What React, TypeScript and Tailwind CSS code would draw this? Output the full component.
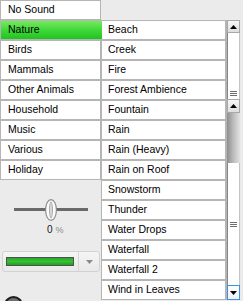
const categories = [
  "No Sound",
  "Nature",
  "Birds",
  "Mammals",
  "Other Animals",
  "Household",
  "Music",
  "Various",
  "Holiday",
];

const sounds = [
  "Beach",
  "Creek",
  "Fire",
  "Forest Ambience",
  "Fountain",
  "Rain",
  "Rain (Heavy)",
  "Rain on Roof",
  "Snowstorm",
  "Thunder",
  "Water Drops",
  "Waterfall",
  "Waterfall 2",
  "Wind in Leaves",
];

function Grip() {
  return (
    <svg width="7" height="6" viewBox="0 0 7 6">
      <rect x="0" y="0" width="7" height="1" fill="#6e6e6e" />
      <rect x="0" y="2" width="7" height="1" fill="#6e6e6e" />
      <rect x="0" y="4" width="7" height="1" fill="#6e6e6e" />
    </svg>
  );
}

function Arrow({ down = false }: { down?: boolean }) {
  return (
    <svg width="7" height="4" viewBox="0 0 7 4">
      <polygon points={down ? "0,0 7,0 3.5,4" : "0,4 7,4 3.5,0"} fill="#000" />
    </svg>
  );
}

function ScrollButton({ h, down = false }: { h: string; down?: boolean }) {
  return (
    <div
      className={`flex shrink-0 items-center justify-center border bg-gradient-to-b ${h} ${
        down
          ? "border-[#3a92e6] from-white to-[#f0f0f0]"
          : "border-[#a8a8a8] from-[#f7f7f7] to-[#dedede]"
      }`}
    >
      <Arrow down={down} />
    </div>
  );
}

export default function App() {
  return (
    <div
      className="flex h-[301px] w-[243px] overflow-hidden bg-[#ebebeb] text-black"
      style={{ fontFamily: '"Liberation Sans", Arial, sans-serif' }}
    >
      {/* Catégories */}
      <div className="flex w-[101px] shrink-0 flex-col">
        <div className="flex shrink-0 flex-col gap-[2px] bg-[#b5b5b5] px-[1px] py-[1px]">
          {categories.map((c) => (
            <div
              key={c}
              className={`flex h-[18px] shrink-0 items-center pl-[7px] text-[10.5px] ${
                c === "Nature"
                  ? "relative z-10 -mr-[2px] bg-gradient-to-b from-[#74ea5e] via-[#3ed83a] to-[#1ec41e]"
                  : "bg-white"
              }`}
            >
              {c}
            </div>
          ))}
        </div>

        {/* Volume */}
        <svg className="mt-[18px] shrink-0" width="101" height="24" viewBox="0 0 101 24">
          <rect x="14" y="10" width="74" height="3" fill="#6a6a6a" />
          <ellipse cx="51" cy="12" rx="6" ry="11" fill="#8c8c8c" />
          <ellipse cx="51" cy="12" rx="4.8" ry="9.8" fill="#fbfbfb" />
          <ellipse cx="51" cy="12" rx="2" ry="8.5" fill="#a9a9a9" />
          <ellipse cx="51" cy="12" rx="1" ry="7.5" fill="#d8d8d8" />
        </svg>
        <div className="mt-[2px] flex h-[12px] shrink-0 items-center pl-[47px] text-[10px] leading-none">
          <span className="text-[#1a1a1a]">0</span>
          <span className="ml-[3px] text-[9px] text-[#8a8a8a]">%</span>
        </div>

        {/* Couleur */}
        <div className="ml-[2px] mt-[15px] flex h-[21px] w-[98px] shrink-0 items-center rounded-[3px] border border-[#d2d2d2] bg-gradient-to-b from-[#f5f5f5] to-[#e9e9e9]">
          <div className="ml-[3px] h-[9px] w-[68px] border border-[#505050] bg-gradient-to-b from-[#2aa52a] via-[#35c335] to-[#1f9f1f]" />
          <div className="ml-[4px] h-full w-px bg-[#d6d6d6]" />
          <div className="flex flex-1 items-center justify-center">
            <svg width="7" height="4" viewBox="0 0 7 4">
              <polygon points="0,0 7,0 3.5,4" fill="#8a8a8a" />
            </svg>
          </div>
        </div>

        <div className="ml-[4px] mt-[24px] h-[19px] w-[19px] shrink-0 rounded-full border-2 border-[#1c1c1c] bg-[#707070]" />
      </div>

      {/* Sons */}
      <div className="flex flex-1 flex-col">
        <div className="h-[20px] shrink-0" />
        <div className="flex shrink-0">
          <div className="flex w-[126px] flex-col gap-[2px] bg-[#b5b5b5] pb-[1px] pl-[1px] pr-[2px] pt-[1px]">
            {sounds.map((s) => (
              <div key={s} className="flex h-[18px] shrink-0 items-center bg-white pl-[6px] text-[10.5px]">
                {s}
              </div>
            ))}
          </div>

          <div className="flex w-[13px] flex-col">
            <ScrollButton h="h-[13px]" />
            <div className="flex h-[66px] shrink-0 flex-col items-center justify-end border-l border-r border-l-[#858585] border-r-[#c4c4c4] bg-white pb-[2px]">
              <Grip />
            </div>
            <ScrollButton h="h-[14px]" />
            <div className="h-[50px] shrink-0 bg-gradient-to-r from-[#8e8e8e] via-[#bdbdbd] to-[#e2e2e2]" />
            <div className="flex h-[122px] shrink-0 flex-col items-center border-l border-r border-l-[#858585] border-r-[#c4c4c4] bg-white pt-[59px]">
              <Grip />
            </div>
            <ScrollButton h="h-[15px]" down />
          </div>
        </div>
      </div>
    </div>
  );
}
